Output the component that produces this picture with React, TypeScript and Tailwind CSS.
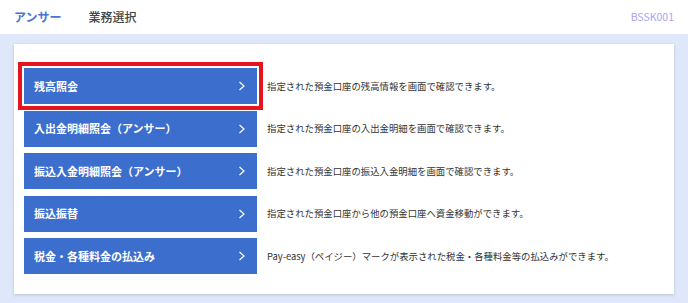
const items = [
  { label: '残高照会', desc: '指定された預金口座の残高情報を画面で確認できます。', active: true },
  { label: '入出金明細照会（アンサー）', desc: '指定された預金口座の入出金明細を画面で確認できます。' },
  { label: '振込入金明細照会（アンサー）', desc: '指定された預金口座の振込入金明細を画面で確認できます。' },
  { label: '振込振替', desc: '指定された預金口座から他の預金口座へ資金移動ができます。' },
  { label: '税金・各種料金の払込み', desc: 'Pay-easy（ペイジー）マークが表示された税金・各種料金等の払込みができます。' },
];

function Chevron() {
  return (
    <svg width="8" height="10" viewBox="0 0 8 10" fill="none">
      <path d="M1.5 1 L6 5 L1.5 9" stroke="white" strokeWidth="1.2" />
    </svg>
  );
}

export default function App() {
  return (
    <div
      className="min-h-screen bg-[#dfe8fb]"
      style={{ fontFamily: '"Noto Sans CJK JP", "Noto Sans", sans-serif' }}
    >
      <header className="flex h-[34px] items-center bg-white px-[14px]">
        <span className="text-[12px] font-bold text-[#4a72d0]">アンサー</span>
        <span className="ml-[27px] text-[12px] font-medium text-[#444]">業務選択</span>
        <span className="ml-auto text-[10.5px] text-[#a8a8ef]">BSSK001</span>
      </header>

      <main className="px-[14px] pt-[10px]">
        <div className="bg-white pb-[20px] pl-[10px] pt-[24px] shadow-[0_1px_3px_rgba(0,0,0,0.18)]">
          <div className="flex flex-col gap-[6.5px]">
            {items.map((it) => (
              <div key={it.label} className="flex items-center">
                <button
                  className={`flex h-[36px] w-[233px] shrink-0 items-center justify-between bg-[#3c6fcd] pl-[10px] pr-[11px] text-left ${
                    it.active ? 'outline-[4px] outline-offset-[2px] outline-[#e5141e] outline-solid' : ''
                  }`}
                >
                  <span className="text-[11px] font-bold text-white">{it.label}</span>
                  <Chevron />
                </button>
                <span className="ml-[10px] text-[9.4px] text-[#333]">{it.desc}</span>
              </div>
            ))}
          </div>
        </div>
      </main>
    </div>
  );
}
